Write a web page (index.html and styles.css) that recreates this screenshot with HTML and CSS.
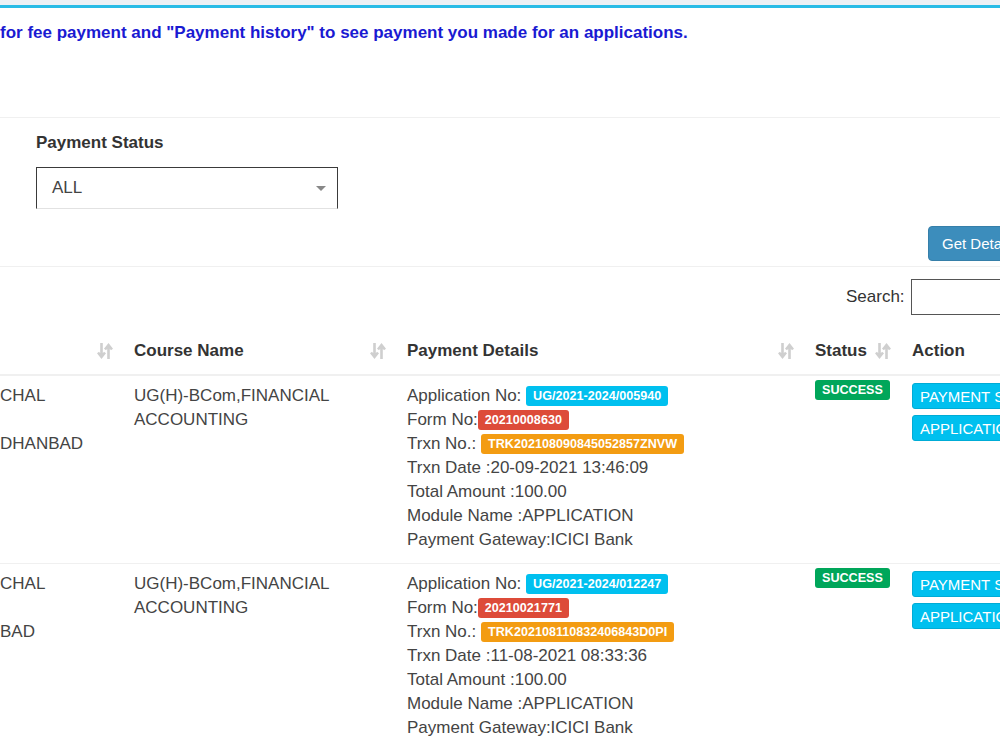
FILE: index.html
```html
<!DOCTYPE html>
<html>
<head>
<meta charset="utf-8">
<link rel="stylesheet" href="styles.css">
</head>
<body>
<div class="page">
  <div class="topbar"></div>
  <div class="box">
    <div class="notice">for fee payment and "Payment history" to see payment you made for an applications.</div>
    <div class="filters">
      <div class="field">
        <div class="field-label">Payment Status</div>
        <div class="select">
          <span>ALL</span>
          <span class="caret"></span>
        </div>
      </div>
      <div class="btn-row">
        <button class="btn-primary">Get Details</button>
      </div>
    </div>
    <div class="results">
      <div class="search-row">
        <label class="search-label">Search:</label>
        <div class="search-input"></div>
      </div>
      <table class="grid">
        <colgroup>
          <col class="c1"><col class="c2"><col class="c3"><col class="c4"><col class="c5">
        </colgroup>
        <thead>
          <tr>
            <th class="sortable"><span class="sort"><svg viewBox="0 0 16 18" width="16" height="18"><path d="M4.5 1v13M1 10.5l3.5 4.5 3.5-4.5M11.5 17V4M8 7.5 11.5 3 15 7.5" fill="none" stroke="#cfcfcf" stroke-width="2.6"/></svg></span></th>
            <th class="sortable">Course Name<span class="sort"><svg viewBox="0 0 16 18" width="16" height="18"><path d="M4.5 1v13M1 10.5l3.5 4.5 3.5-4.5M11.5 17V4M8 7.5 11.5 3 15 7.5" fill="none" stroke="#cfcfcf" stroke-width="2.6"/></svg></span></th>
            <th class="sortable">Payment Details<span class="sort"><svg viewBox="0 0 16 18" width="16" height="18"><path d="M4.5 1v13M1 10.5l3.5 4.5 3.5-4.5M11.5 17V4M8 7.5 11.5 3 15 7.5" fill="none" stroke="#cfcfcf" stroke-width="2.6"/></svg></span></th>
            <th class="sortable">Status<span class="sort"><svg viewBox="0 0 16 18" width="16" height="18"><path d="M4.5 1v13M1 10.5l3.5 4.5 3.5-4.5M11.5 17V4M8 7.5 11.5 3 15 7.5" fill="none" stroke="#cfcfcf" stroke-width="2.6"/></svg></span></th>
            <th>Action</th>
          </tr>
        </thead>
        <tbody>
          <tr>
            <td class="first">CHAL<br><br>DHANBAD</td>
            <td>UG(H)-BCom,FINANCIAL ACCOUNTING</td>
            <td>
              Application No: <span class="label info">UG/2021-2024/005940</span><br>
              Form No:<span class="label danger">20210008630</span><br>
              Trxn No.: <span class="label warning">TRK202108090845052857ZNVW</span><br>
              Trxn Date :20-09-2021 13:46:09<br>
              Total Amount :100.00<br>
              Module Name :APPLICATION<br>
              Payment Gateway:ICICI Bank
            </td>
            <td class="status"><span class="label success">SUCCESS</span></td>
            <td>
              <div class="actions">
                <button class="btn-info">PAYMENT SLIP</button>
                <button class="btn-info">APPLICATION FORM</button>
              </div>
            </td>
          </tr>
          <tr>
            <td class="first">CHAL<br><br>BAD</td>
            <td>UG(H)-BCom,FINANCIAL ACCOUNTING</td>
            <td>
              Application No: <span class="label info">UG/2021-2024/012247</span><br>
              Form No:<span class="label danger">20210021771</span><br>
              Trxn No.: <span class="label warning">TRK202108110832406843D0PI</span><br>
              Trxn Date :11-08-2021 08:33:36<br>
              Total Amount :100.00<br>
              Module Name :APPLICATION<br>
              Payment Gateway:ICICI Bank
            </td>
            <td class="status"><span class="label success">SUCCESS</span></td>
            <td>
              <div class="actions">
                <button class="btn-info">PAYMENT SLIP</button>
                <button class="btn-info">APPLICATION FORM</button>
              </div>
            </td>
          </tr>
        </tbody>
      </table>
    </div>
  </div>
</div>
</body>
</html>
```

FILE: styles.css
```css
html, body {
  margin: 0;
  padding: 0;
  overflow: hidden;
  background: #fff;
}
body {
  font-family: "Liberation Sans", Arial, sans-serif;
  font-size: 17px;
  line-height: 24px;
  color: #333;
  width: 1000px;
  height: 749px;
}
.page {
  width: 1100px;
}
.topbar {
  height: 5px;
  background: #ecf0f5;
}
.box {
  border-top: 3px solid #29bbe6;
}
.notice {
  color: #1a1ad2;
  font-weight: bold;
  padding: 13px 0 0 0;
  height: 96px;
  border-bottom: 1px solid #f0f0f0;
}
.filters {
  padding: 13px 0 0 0;
  border-bottom: 1px solid #f0f0f0;
  height: 149px;
  box-sizing: border-box;
}
.field {
  padding-left: 36px;
}
.field-label {
  font-weight: bold;
  margin-bottom: 12px;
}
.select {
  width: 302px;
  height: 42px;
  box-sizing: border-box;
  border: 1px solid #3a3a3a;
  border-bottom-color: #e2e2e2;
  display: flex;
  align-items: center;
  justify-content: space-between;
  padding: 0 11px 0 15px;
  color: #444;
}
.caret {
  width: 0;
  height: 0;
  border-left: 5px solid transparent;
  border-right: 5px solid transparent;
  border-top: 5px solid #888;
}
.btn-row {
  display: flex;
  padding-left: 928px;
  margin-top: 17px;
}
.btn-primary {
  background: #3c8dbc;
  border: 1px solid #367fa9;
  color: #fff;
  font-family: inherit;
  font-size: 15px;
  height: 35px;
  padding: 0 13px;
  border-radius: 4px;
  white-space: nowrap;
}
.results {
  padding-top: 12px;
}
.search-row {
  display: flex;
  align-items: center;
  padding-left: 846px;
  height: 36px;
}
.search-label {
  margin-right: 6px;
  color: #333;
}
.search-input {
  width: 160px;
  height: 36px;
  box-sizing: border-box;
  border: 1px solid #555;
}
.grid {
  border-collapse: collapse;
  table-layout: fixed;
  width: 1100px;
  margin-top: 13px;
}
.c1 { width: 124px; }
.c2 { width: 273px; }
.c3 { width: 408px; }
.c4 { width: 97px; }
.c5 { width: 198px; }
.grid th {
  text-align: left;
  font-weight: bold;
  padding: 11px 10px;
  border-bottom: 2px solid #f0f0f0;
  position: relative;
  white-space: nowrap;
}
.grid th.sortable {
  padding-right: 30px;
}
.sort {
  position: absolute;
  right: 11px;
  top: 14px;
  width: 16px;
  height: 18px;
}
.sort svg {
  display: block;
}
.grid td {
  vertical-align: top;
  padding: 8px 10px 11px 10px;
  border-bottom: 1px solid #f0f0f0;
  color: #444;
}
.grid td.first {
  padding-left: 0;
}
.grid td.status {
  padding-top: 2px;
}
.label {
  display: inline-block;
  font-size: 12.6px;
  font-weight: bold;
  line-height: 14px;
  color: #fff;
  padding: 3px 7px 3px 7px;
  border-radius: 3px;
  vertical-align: 1px;
}
.info { background: #00c0ef; }
.danger { background: #dd4b39; }
.warning { background: #f39c12; }
.success { background: #00a65a; }
.actions {
  display: flex;
  flex-direction: column;
  align-items: flex-start;
  gap: 6px;
  margin-top: -1px;
}
.btn-info {
  background: #00c0ef;
  border: 1px solid #00acd6;
  color: #fff;
  font-family: inherit;
  font-size: 15px;
  height: 26px;
  padding: 0 7px;
  border-radius: 3px;
  white-space: nowrap;
}
```
